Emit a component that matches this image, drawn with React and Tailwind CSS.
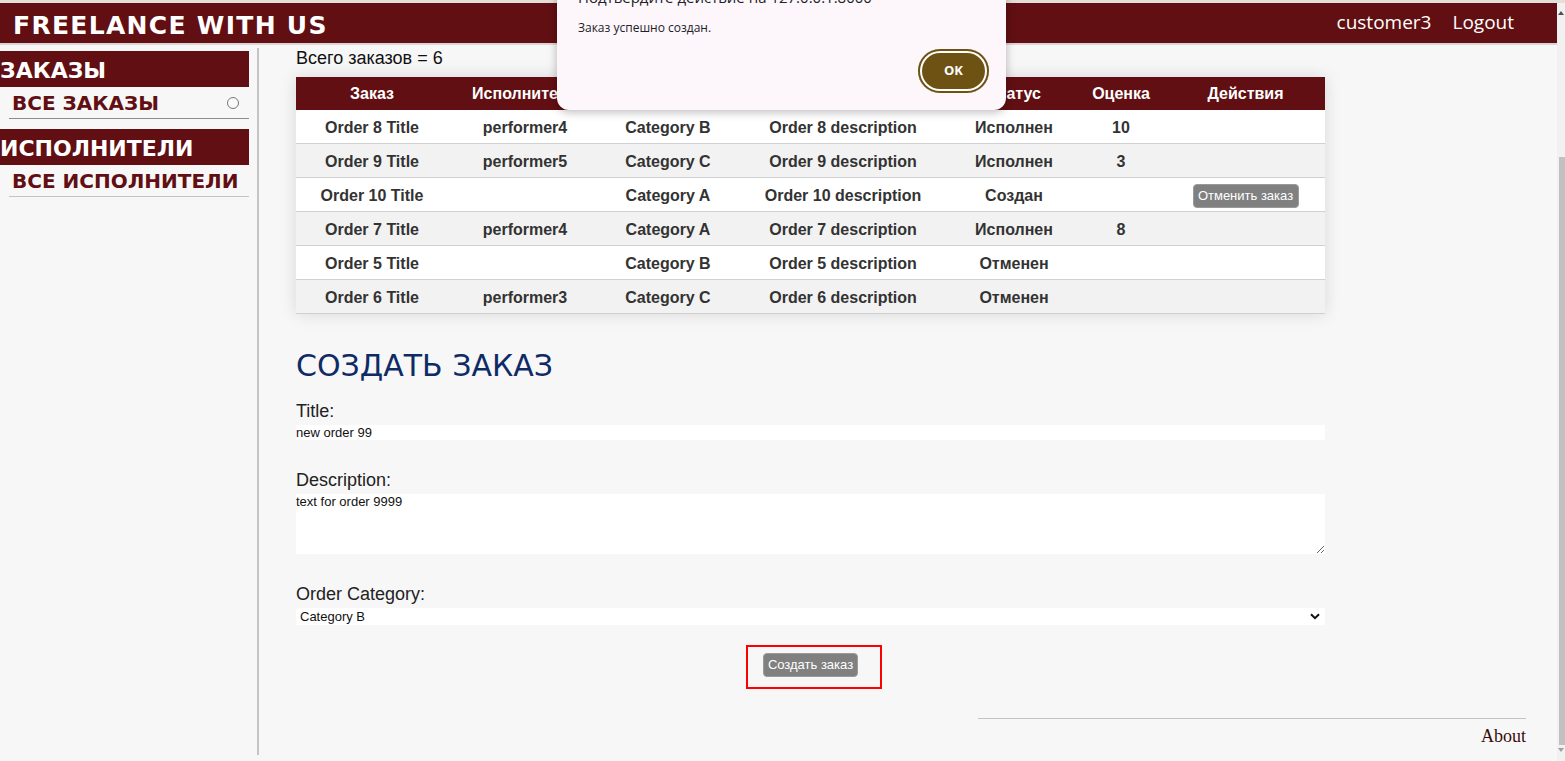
import React from "react";

const rows = [
  ["Order 8 Title", "performer4", "Category B", "Order 8 description", "Исполнен", "10", false],
  ["Order 9 Title", "performer5", "Category C", "Order 9 description", "Исполнен", "3", false],
  ["Order 10 Title", "", "Category A", "Order 10 description", "Создан", "", true],
  ["Order 7 Title", "performer4", "Category A", "Order 7 description", "Исполнен", "8", false],
  ["Order 5 Title", "", "Category B", "Order 5 description", "Отменен", "", false],
  ["Order 6 Title", "performer3", "Category C", "Order 6 description", "Отменен", "", false],
];

const heads = ["Заказ", "Исполнитель", "Категория", "Описание", "Статус", "Оценка", "Действия"];

function Sidebar() {
  return (
    <aside className="w-[257px] shrink-0 pt-[6px] font-['DejaVu_Sans',Verdana,sans-serif]">
      <div className="w-[249px] h-[36px] bg-[#610f12] pt-[7px] text-white text-[22px] font-bold leading-[26px]">
        ЗАКАЗЫ
      </div>
      <div className="ml-[9px] w-[240px] h-[32px] border-b border-[#8c8c8c] flex items-start justify-between pl-[3px] pt-[5px] pr-[10px]">
        <span className="text-[20px] leading-[23px] font-bold text-[#610f12]">ВСЕ ЗАКАЗЫ</span>
        <span className="mt-[5px] w-[12px] h-[12px] rounded-full border border-[#777777] bg-[#fafafa]" />
      </div>
      <div className="mt-[10px] w-[249px] h-[36px] bg-[#610f12] pt-[7px] text-white text-[22px] font-bold leading-[26px]">
        ИСПОЛНИТЕЛИ
      </div>
      <div className="ml-[9px] w-[240px] h-[32px] border-b border-[#c4c4c4] flex items-start pl-[3px] pt-[5px]">
        <span className="text-[20px] leading-[23px] font-bold text-[#610f12]">ВСЕ ИСПОЛНИТЕЛИ</span>
      </div>
    </aside>
  );
}

function OrdersTable() {
  return (
    <div className="mt-[8px] w-[1029px] shadow-[0_0_16px_rgba(0,0,0,0.13)]">
      <div className="grid grid-cols-[152px_154px_132px_218px_124px_90px_159px] h-[33px] items-center bg-[#610f12] text-white text-[16px] font-bold text-center">
        {heads.map((h) => (
          <div key={h}>{h}</div>
        ))}
      </div>
      {rows.map((r, i) => (
        <div
          key={i}
          className={
            "grid grid-cols-[152px_154px_132px_218px_124px_90px_159px] h-[34px] pt-[2px] items-center border-b border-[#d0d0d0] text-[16px] font-bold text-[#333333] text-center " +
            (i % 2 === 0 ? "bg-white" : "bg-[#f2f2f2]")
          }
        >
          <div>{r[0]}</div>
          <div>{r[1]}</div>
          <div>{r[2]}</div>
          <div>{r[3]}</div>
          <div>{r[4]}</div>
          <div>{r[5]}</div>
          <div className="flex justify-center">
            {r[6] && (
              <button className="w-[106px] h-[24px] rounded-[4px] bg-[#808080] border border-[#9a9a9a] text-[13px] font-normal text-white leading-[22px]">
                Отменить заказ
              </button>
            )}
          </div>
        </div>
      ))}
    </div>
  );
}

function CreateForm() {
  return (
    <div className="w-[1029px]">
      <h2 className="mt-[34px] text-[30px] leading-[35px] text-[#0f2b66] font-['DejaVu_Sans',Verdana,sans-serif]">
        СОЗДАТЬ ЗАКАЗ
      </h2>
      <label className="block mt-[18px] text-[18px] leading-[21px] text-[#222222]">Title:</label>
      <input
        readOnly
        value="new order 99"
        className="block mt-[3px] w-[1029px] h-[15px] bg-white text-[13px] leading-[15px] text-[#111111] outline-none"
      />
      <label className="block mt-[30px] text-[18px] leading-[21px] text-[#222222]">Description:</label>
      <textarea
        readOnly
        value="text for order 9999"
        className="block mt-[3px] w-[1029px] h-[60px] bg-white text-[13px] leading-[15px] text-[#111111] outline-none resize-y"
      />
      <label className="block mt-[30px] text-[18px] leading-[21px] text-[#222222]">Order Category:</label>
      <div className="mt-[3px] w-[1029px] h-[17px] bg-white flex items-center justify-between pl-[4px] pr-[5px] text-[13px] text-[#111111]">
        <span>Category B</span>
        <svg width="10" height="7" viewBox="0 0 10 7">
          <path d="M1 1.2 L5 5.2 L9 1.2" fill="none" stroke="#111" strokeWidth="2" />
        </svg>
      </div>
      <div className="mt-[27px] flex justify-center">
        <div className="relative">
          <button className="w-[95px] h-[24px] rounded-[4px] bg-[#808080] border border-[#9a9a9a] text-[13px] text-white leading-[22px]">
            Создать заказ
          </button>
          <div className="absolute left-[-17px] top-[-7px] w-[136px] h-[44px] border-2 border-[#ff0000] pointer-events-none" />
        </div>
      </div>
    </div>
  );
}

function Scrollbar() {
  return (
    <div className="w-[8px] shrink-0 bg-[#f1f1f1] flex flex-col">
      <div className="h-[154px] flex justify-center pt-[8px]">
        <svg width="6" height="4" viewBox="0 0 6 4">
          <path d="M0 4 L3 0 L6 4Z" fill="#505050" />
        </svg>
      </div>
      <div className="ml-[2px] w-[6px] h-[588px] bg-[#c1c1c1]" />
      <div className="flex justify-center pt-[3px]">
        <svg width="6" height="4" viewBox="0 0 6 4">
          <path d="M0 0 L3 4 L6 0Z" fill="#a0a0a0" />
        </svg>
      </div>
    </div>
  );
}

function Dialog() {
  return (
    <div className="absolute left-[557px] top-[-32px] w-[449px] rounded-[12px] bg-[#fdf7fc] shadow-[0_2px_10px_rgba(0,0,0,0.28)] pl-[21px] pr-[17px] pt-[19px] pb-[17px] font-['Open_Sans',sans-serif]">
      <div className="text-[15px] leading-[20px] text-[#202124]">Подтвердите действие на 127.0.0.1:8000</div>
      <div className="mt-[12px] text-[12px] leading-[18px] text-[#202124]">Заказ успешно создан.</div>
      <div className="mt-[12px] flex justify-end">
        <button className="w-[71px] h-[44px] rounded-full bg-[#6e5213] text-white text-[13px] font-bold shadow-[inset_0_0_0_2px_#6e5213,inset_0_0_0_4px_#ffffff]">
          OK
        </button>
      </div>
    </div>
  );
}

export default function App() {
  return (
    <div className="relative w-[1565px] h-[761px] overflow-hidden bg-[#f7f7f7] font-['Liberation_Sans',Arial,sans-serif] flex flex-col">
      <div className="h-[3px] shrink-0 bg-[#e5dfd9]" />
      <div className="flex flex-1 min-h-0">
        <div className="flex-1 flex flex-col min-w-0">
          <header className="h-[40px] shrink-0 bg-[#610f12] flex items-start justify-between pl-[13px] pr-[43px]">
            <div className="pt-[8px] leading-[29px] text-[25px] tracking-[1.3px] font-bold text-white font-['DejaVu_Sans',Verdana,sans-serif]">
              FREELANCE WITH US
            </div>
            <div className="pt-[6px] flex leading-[26px] text-[19px] text-white font-['Open_Sans',sans-serif]">
              <span>customer3</span>
              <span className="ml-[21px]">Logout</span>
            </div>
          </header>
          <div className="h-[2px] shrink-0 bg-[#ddd4d4]" />
          <div className="flex flex-1 min-h-0">
            <Sidebar />
            <div className="w-[2px] shrink-0 bg-[#c4c4c4] mt-[3px] mb-[6px]" />
            <main className="flex-1 min-w-0 pl-[37px] pt-[3px] flex flex-col">
              <p className="text-[18px] leading-[21px] text-[#111111]">Всего заказов = 6</p>
              <OrdersTable />
              <CreateForm />
              <div className="mt-[41px] ml-auto mr-[31px] w-[548px] border-t border-[#c4c4c4] pt-[7px] text-right font-['Liberation_Serif',serif] text-[18px] leading-[21px] text-[#3a0b0b]">
                About
              </div>
            </main>
          </div>
        </div>
        <Scrollbar />
      </div>
      <Dialog />
    </div>
  );
}
